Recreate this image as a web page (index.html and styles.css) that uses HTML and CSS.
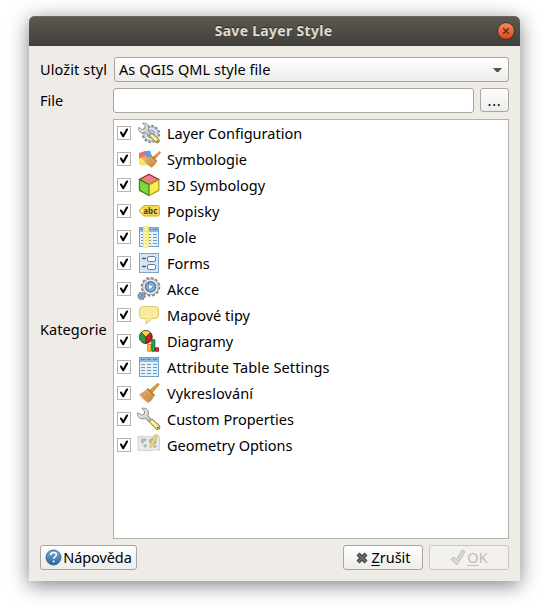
FILE: index.html
```
<!DOCTYPE html>
<html lang="cs">
<head>
<meta charset="utf-8">
<title>Save Layer Style</title>
<link rel="stylesheet" href="styles.css">
</head>
<body>
<svg class="defs" width="0" height="0">
  <defs>
    <linearGradient id="steel" x1="0" y1="0" x2="1" y2="1"><stop offset="0" stop-color="#fff"/><stop offset="1" stop-color="#b5b6b1"/></linearGradient>
    <linearGradient id="wood" x1="0" y1="0" x2="1" y2="1"><stop offset="0" stop-color="#e9b877"/><stop offset="1" stop-color="#cd8a41"/></linearGradient>
    <linearGradient id="blue" x1="0" y1="0" x2="0" y2="1"><stop offset="0" stop-color="#79aedb"/><stop offset="1" stop-color="#286295"/></linearGradient>
    <symbol id="check" viewBox="0 0 14 14"><path d="M4 6.5 6.2 10.2 10 3.5" fill="none" stroke="#000" stroke-width="2.1" stroke-linecap="round" stroke-linejoin="round"/></symbol>
    <symbol id="wrench" viewBox="0 0 24 24">
      <path d="M4.8 1.4Q9.5.4 11.2 4.2q.8 2.5-.2 4.6l3.5 3.7L12 15l-3.6-3.6Q3.2 13 1.2 9.4.2 7.6.8 5.8L4.6 8.2 7.3 7l.3-3Z" fill="url(#steel)" stroke="#80817c" stroke-width=".9"/>
      <path d="m12 14.6 2.8-2.8 8 7-.2 3-2.8.9Z" fill="#eedb70" stroke="#77733c" stroke-width=".9"/><path d="m14.5 14.2 6 6" stroke="#fff6b8" stroke-width="1.5"/><circle cx="20.8" cy="20.6" r=".9" fill="#555"/>
    </symbol>
    <symbol id="brush" viewBox="0 0 24 24">
      <path d="m21 2.3 1.2 1.2-6.9 8.2-2.6-2.4Z" fill="#dda049" stroke="#c0802f" stroke-width=".9"/><path d="m10.8 8 6.4 6.2q-1.7 5-5.8 7.5-5.2-3-8.9-8.2Q6.8 11 10.8 8Z" fill="url(#wood)" stroke="#cc9049" stroke-width=".7"/><path d="m10.8 8 6.4 6.2" stroke="#b17a38" stroke-width="1.6" stroke-linecap="round"/><path d="m5 14 5.5-3.3M7 16.3l5.3-3.7m-3.3 6 5-4.2m-3 6 3.8-4.2" stroke="#b97a36" stroke-width=".5"/>
    </symbol>
    <symbol id="table" viewBox="0 0 24 24"><rect x="2.5" y="2.5" width="19" height="19" fill="#e6f0f9" stroke="#6f9fcd"/><path d="M3 3h18v4H3Z" fill="#8fb9e0"/><path d="M4 4.5h4m2 0h4m2 0h4" stroke="#5584b1"/><path d="M4 9.5h4m2 0h4m2 0h4M4 12.5h4m2 0h4m2 0h4M4 15.5h4m2 0h4m2 0h4M4 18.5h4m2 0h4m2 0h4" stroke="#7098bd"/></symbol>
  </defs>
</svg>
<main class="window">
  <header class="titlebar"><h1>Save Layer Style</h1>
    <button class="close" aria-label="Close"><svg viewBox="0 0 16 16"><path d="m5.2 5.2 5.6 5.6m0-5.6-5.6 5.6" stroke="#493021" stroke-width="1.3"/></svg></button>
  </header>
  <div class="content">
    <div class="form">
      <label class="label"><span class="t-style">Uložit styl</span></label>
      <div class="combo"><span class="t-combo">As QGIS QML style file</span><svg width="9" height="5" viewBox="0 0 9 5"><path d="M0 0h9L5.5 4h-2Z" fill="#555"/></svg></div>
      <label class="label"><span class="t-file">File</span></label>
      <div class="file"><input class="field" type="text" aria-label="File"><button class="browse">...</button></div>
      <label class="label cat"><span>Kategorie</span></label>
      <ul class="list">
        <li><span class="box"><svg><use href="#check"/></svg></span><svg class="icon" viewBox="0 0 24 24"><circle cx="14" cy="13" r="8.3" fill="none" stroke="#858d95" stroke-width="1.8" stroke-dasharray="2.6 1.75"/><circle cx="14" cy="13" r="7.2" fill="#dce5ee" stroke="#8e989f"/><circle cx="14" cy="13" r="4" fill="#b8d0e7" stroke="#8aa6c0"/><g transform="translate(1 1) scale(.93)"><use href="#wrench" width="24" height="24"/></g></svg><span>Layer Configuration</span></li>
        <li><span class="box"><svg><use href="#check"/></svg></span><svg class="icon" viewBox="0 0 24 24"><path d="m2 6 6-2 2 7-8 1Z" fill="#f06d70"/><path d="m7.5 4.2 5.5-.7 2 6-6 2Z" fill="#5e9ce8"/><path d="m2 11.5 7-2 5 7-7 2.5-5-1.5Z" fill="#f7e36c"/><path d="m5 10 4-1 1 3-4 1Z" fill="#f5a35f"/><g transform="translate(5.2 2.5) scale(.83)"><use href="#brush" width="24" height="24"/></g></svg><span>Symbologie</span></li>
        <li><span class="box"><svg><use href="#check"/></svg></span><svg class="icon" viewBox="0 0 24 24"><path d="M12 1.2 21.8 6.5 12 11.7 2.5 6.5Z" fill="#e78387" stroke="#a3252c" stroke-width="1.3"/><path d="M2.5 6.7 12 11.7v10.8l-9.5-5.2Z" fill="#7bdb3e" stroke="#348a12" stroke-width="1.3"/><path d="m21.8 6.7-9.4 5v10.8l9.4-5.2Z" fill="#faec50" stroke="#b09b21" stroke-width="1.3"/></svg><span>3D Symbology</span></li>
        <li><span class="box"><svg><use href="#check"/></svg></span><svg class="icon" viewBox="0 0 24 24"><path d="M7 6.5h13.7q1.8 0 1.8 1.8v6.9q0 1.8-1.8 1.8H7l-4.5-4.2v-2Z" fill="#f4d94f" stroke="#cbae31"/><circle cx="5" cy="11.8" r="1" fill="#fff"/><text x="6.3" y="14.6" class="abc" textLength="14">abc</text></svg><span>Popisky</span></li>
        <li><span class="box"><svg><use href="#check"/></svg></span><svg class="icon" viewBox="0 0 24 24"><use href="#table" width="24" height="24"/><path d="M6.5 1.7h5v20.6h-5Z" fill="#fbf3ac" stroke="#f6ea63"/><path d="M7 3h4v4H7Z" fill="#eadd7d"/><circle cx="9" cy="4.8" r="1.2" fill="#fff"/><path d="M7.5 9.5h3m-3 3h3m-3 3h3m-3 3h3" stroke="#e7dd90"/></svg><span>Pole</span></li>
        <li><span class="box"><svg><use href="#check"/></svg></span><svg class="icon" viewBox="0 0 24 24"><rect x="2.5" y="2.5" width="19" height="19" fill="#d8e6f4" stroke="#7ea4c8"/><path d="M5 7.5h4m-4 8h4" stroke="#4a6075" stroke-width="1.4"/><rect x="10.5" y="5.5" width="8" height="5" rx="1.5" fill="#fff" stroke="#5b82a8"/><rect x="10.5" y="13.5" width="8" height="5" rx="1.5" fill="#fff" stroke="#5b82a8"/></svg><span>Forms</span></li>
        <li><span class="box"><svg><use href="#check"/></svg></span><svg class="icon" viewBox="0 0 24 24"><circle cx="13.5" cy="9.8" r="8.9" fill="none" stroke="#85888a" stroke-width="1.8" stroke-dasharray="3 1.66"/><circle cx="13.5" cy="9.8" r="7.9" fill="#e9e9e8" stroke="#999c9e"/><circle cx="13.5" cy="9.8" r="5" fill="#8bb5de" stroke="#4f7bab" stroke-width="1.5"/><path d="m11.6 6.7 5 3.1-5 3.1Z" fill="#fff" stroke="#41699a" stroke-width=".6"/><circle cx="4.5" cy="19" r="3.4" fill="#9eb3c6" stroke="#7c858b" stroke-width="1.7" stroke-dasharray="1.7 .97"/><circle cx="4.5" cy="19" r="1.8" fill="#76a1d2" stroke="#5d87b3" stroke-width=".6"/></svg><span>Akce</span></li>
        <li><span class="box"><svg><use href="#check"/></svg></span><svg class="icon" viewBox="0 0 24 24"><path d="M5.5 3.5h13q3 0 3 3v6q0 3-3 3h-4q-2 3.8-6 5.2 1.2-2.2.6-5.2H5.5q-3 0-3-3v-6q0-3 3-3Z" fill="#f8eb9e" stroke="#dcc76a"/></svg><span>Mapové tipy</span></li>
        <li><span class="box"><svg><use href="#check"/></svg></span><svg class="icon" viewBox="0 0 24 24"><circle cx="8.8" cy="8" r="6.4" fill="#d41a1c" stroke="#282c22"/><path d="M8.8 8 4.2 3.5Q8.5-.2 13.4 3.5Z" fill="#f7d038"/><path d="M8.8 8 4.2 3.5Q-.5 8.5 5 12.9L8.8 14Z" fill="#249b4d"/><path d="M8.8 14V8L4.2 3.5M8.8 8l4.6-4.5" fill="none" stroke="#333" stroke-width=".7"/><path d="M10.7 15.5H14v6.7h-3.3Z" fill="#fbc847" stroke="#df8b21"/><path d="M14.8 10.8h3v11.4h-3Z" fill="#35a366" stroke="#11682e"/><path d="M18.5 18.8h3v3.4h-3Z" fill="#d93c38" stroke="#8e1917"/></svg><span>Diagramy</span></li>
        <li><span class="box"><svg><use href="#check"/></svg></span><svg class="icon"><use href="#table"/></svg><span class="t-attr">Attribute Table Settings</span></li>
        <li><span class="box"><svg><use href="#check"/></svg></span><svg class="icon"><use href="#brush"/></svg><span class="t-render">Vykreslování</span></li>
        <li><span class="box"><svg><use href="#check"/></svg></span><svg class="icon"><use href="#wrench"/></svg><span>Custom Properties</span></li>
        <li><span class="box"><svg><use href="#check"/></svg></span><svg class="icon" viewBox="0 0 24 24"><path d="M1 3.5q3-.8 6 0t8-.3 7.5.3v13.8q-3.5-.8-7 0t-7.5.2-7 0Z" fill="#e9e9e9" stroke="#d2d2d2"/><path d="m4 6 4-1 2 2-3 2-1 2-2-2Zm8 0 4-1 4 3-2 4-2-3-2 2-2-2Zm-6 6 3-1 1 2-2 2Zm10 1 3-1 1 2-3 1Z" fill="#b5b5b5"/><path d="m18.5 1.2 2.4 1.2-5 10.3-2.7 1.8-.1-3.2Z" fill="#f0dc67" stroke="#b6ac66" stroke-width=".7"/></svg><span>Geometry Options</span></li>
      </ul>
    </div>
    <footer class="actions">
      <button class="btn help"><svg width="17" height="17" viewBox="0 0 17 17"><circle cx="8.5" cy="8.5" r="7.5" fill="url(#blue)" stroke="#3c688f"/><path d="M5.7 6.2Q5.8 3.5 8.6 3.5t2.8 2.3c0 2-2.8 2.1-2.8 4.2" fill="none" stroke="#fff" stroke-width="1.5"/><circle cx="8.6" cy="12.5" r="1" fill="#fff"/></svg><span class="t-help">Nápověda</span></button>
      <button class="btn cancel"><svg width="14" height="14" viewBox="0 0 14 14"><path d="m3 3 8 8m0-8-8 8" stroke="#414540" stroke-width="4.3"/><path d="m3 3 8 8m0-8-8 8" stroke="#666a65" stroke-width="2.3"/></svg><span><u>Z</u>rušit</span></button>
      <button class="btn ok" disabled><svg width="16" height="17" viewBox="0 0 16 17"><path d="m1 10 3-2 2.5 2.5L12 1l3 1.5-8 13.5Z" fill="#d7d8d1" stroke="#c0c1ba"/></svg><span><u>O</u>K</span></button>
    </footer>
  </div>
</main>
</body>
</html>
```
FILE: styles.css
```
* { box-sizing: border-box; }
html, body { margin: 0; width: 544px; height: 613px; overflow: hidden; background: #fff; }
body { padding: 16px 24px 32px 29px; font: 14.5px/20px "Noto Sans", sans-serif; color: #000; }
button, input { font: inherit; color: inherit; margin: 0; padding: 0; }
.defs { position: absolute; }
.window { width: 491px; height: 565px; display: flex; flex-direction: column; background: #efebe7; border-radius: 6px 6px 0 0; box-shadow: 0 4px 20px rgba(0,0,0,.5); }
.titlebar { height: 30px; display: grid; grid-template-columns: 25px 1fr 25px; align-items: center; padding-right: 2px; border-radius: 6px 6px 0 0; background: linear-gradient(#5d5a51, #403f3a); box-shadow: inset 0 1px #6c685e; }
h1 { grid-column: 2; margin: 0; text-align: center; color: #dfdbd2; font-size: 14px; line-height: 20px; font-weight: 700; letter-spacing: .3px; text-shadow: 0 -1px #2b2a26; }
.close { width: 18px; height: 18px; border-radius: 50%; border: 1px solid #35332e; background: linear-gradient(#f7875e, #df4816); justify-self: center; }
.close svg { display: block; width: 16px; height: 16px; }
.content { flex: 1; display: flex; flex-direction: column; padding: 11px 11px 11px; gap: 6px; }
.form { display: grid; grid-template-columns: 73px 396px; grid-template-rows: 25px 25px 420px; row-gap: 6px; }
.label { display: flex; align-items: center; white-space: nowrap; padding-bottom: 2px; }
.cat { padding: 0; letter-spacing: .07px; }
.t-style { letter-spacing: .12px; }
.combo { margin-left: 1px; border: 1px solid #aaa5a0; border-radius: 3px; background: linear-gradient(#fff, #ececeb); display: flex; align-items: center; justify-content: space-between; padding: 0 6px 0 4px; }
.combo svg { margin-top: 2px; }
.t-combo { padding-bottom: 2px; letter-spacing: .05px; }
.file { display: flex; gap: 6px; }
.field { width: 361px; height: 25px; border: 1px solid #aaa5a0; border-radius: 3px; background: #fff; }
.browse { width: 29px; height: 24px; border: 1px solid #aaa5a0; border-radius: 3px; background: linear-gradient(#fff, #ececeb); letter-spacing: .8px; }
.list { list-style: none; margin: 0; padding: 0 0 0 3px; background: #fff; border: 1px solid #b5b1ad; }
.list li { height: 26px; display: flex; align-items: center; white-space: nowrap; }
.box { width: 14px; height: 14px; border: 1px solid #b7b5b2; background: #fff; flex: none; }
.box svg { display: block; width: 14px; height: 14px; margin: -1px; }
.icon { width: 24px; height: 24px; margin: 0 6px; flex: none; }
.t-attr { letter-spacing: .14px; }
.t-render { letter-spacing: .08px; }
.abc { font: 700 8px "Noto Sans", sans-serif; fill: #4b431f; }
.actions { display: flex; gap: 6px; height: 25px; }
.btn { height: 25px; display: flex; align-items: center; justify-content: center; border: 1px solid #aaa5a0; border-radius: 3px; background: linear-gradient(#fff, #ececeb); white-space: nowrap; }
.btn span { padding-bottom: 2px; }
.help { width: 97px; margin-right: auto; gap: 1px; }
.t-help { letter-spacing: -.1px; }
.cancel { width: 80px; gap: 2px; }
.ok { width: 80px; gap: 1px; border-color: #c9c5c1; background: #f3f1ef; color: #bdbbb8; }
u { text-decoration-thickness: 1px; text-underline-offset: 2px; text-decoration-skip-ink: none; }
```
